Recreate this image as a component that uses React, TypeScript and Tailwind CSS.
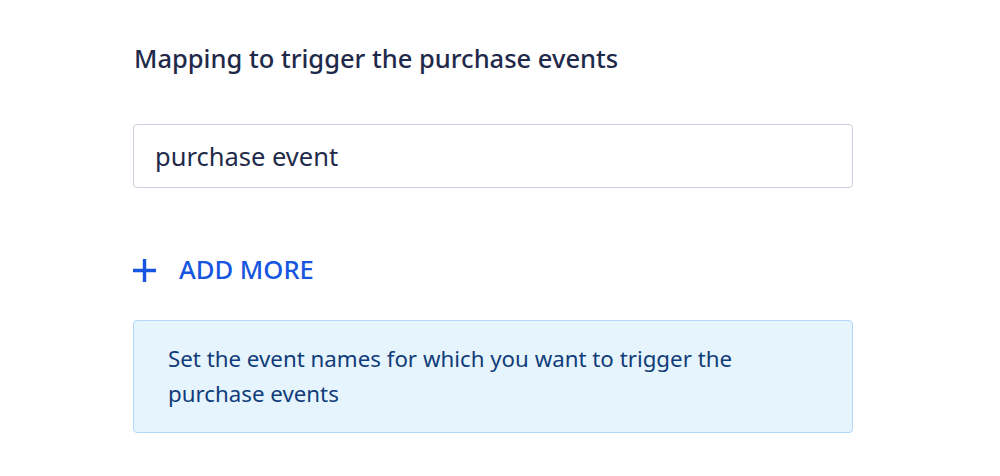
export default function App() {
  return (
    <div className="min-h-[476px] w-full bg-white font-['Noto_Sans',sans-serif]">
      <div className="ml-[133px] w-[720px] pt-[38px]">
        <h2 className="text-[25.5px] leading-[40px] font-medium text-[#1f2a4a] pl-[1px]">
          Mapping to trigger the purchase events
        </h2>

        <input
          className="mt-[46px] block h-[64px] w-full rounded-[4px] border border-[#c9d2dc] px-[21px] text-[25.5px] text-[#1f2a4a] outline-none"
          defaultValue="purchase event"
        />

        <button className="mt-[64px] flex items-center gap-[23px] text-[#1656e0]">
          <svg width="23" height="23" viewBox="0 0 23 23" className="shrink-0">
            <path d="M11.5 0v23M0 11.5h23" stroke="currentColor" strokeWidth="3.4" />
          </svg>
          <span className="text-[25.6px] leading-[36px] font-medium">ADD MORE</span>
        </button>

        <div className="mt-[32px] rounded-[4px] border border-[#b3d8f7] bg-[#e6f4fd] px-[34px] pt-[20px] pb-[21px] text-[22.3px] leading-[35px] text-[#113c7a]">
          Set the event names for which you want to trigger the
          <br />
          purchase events
        </div>
      </div>
    </div>
  );
}
